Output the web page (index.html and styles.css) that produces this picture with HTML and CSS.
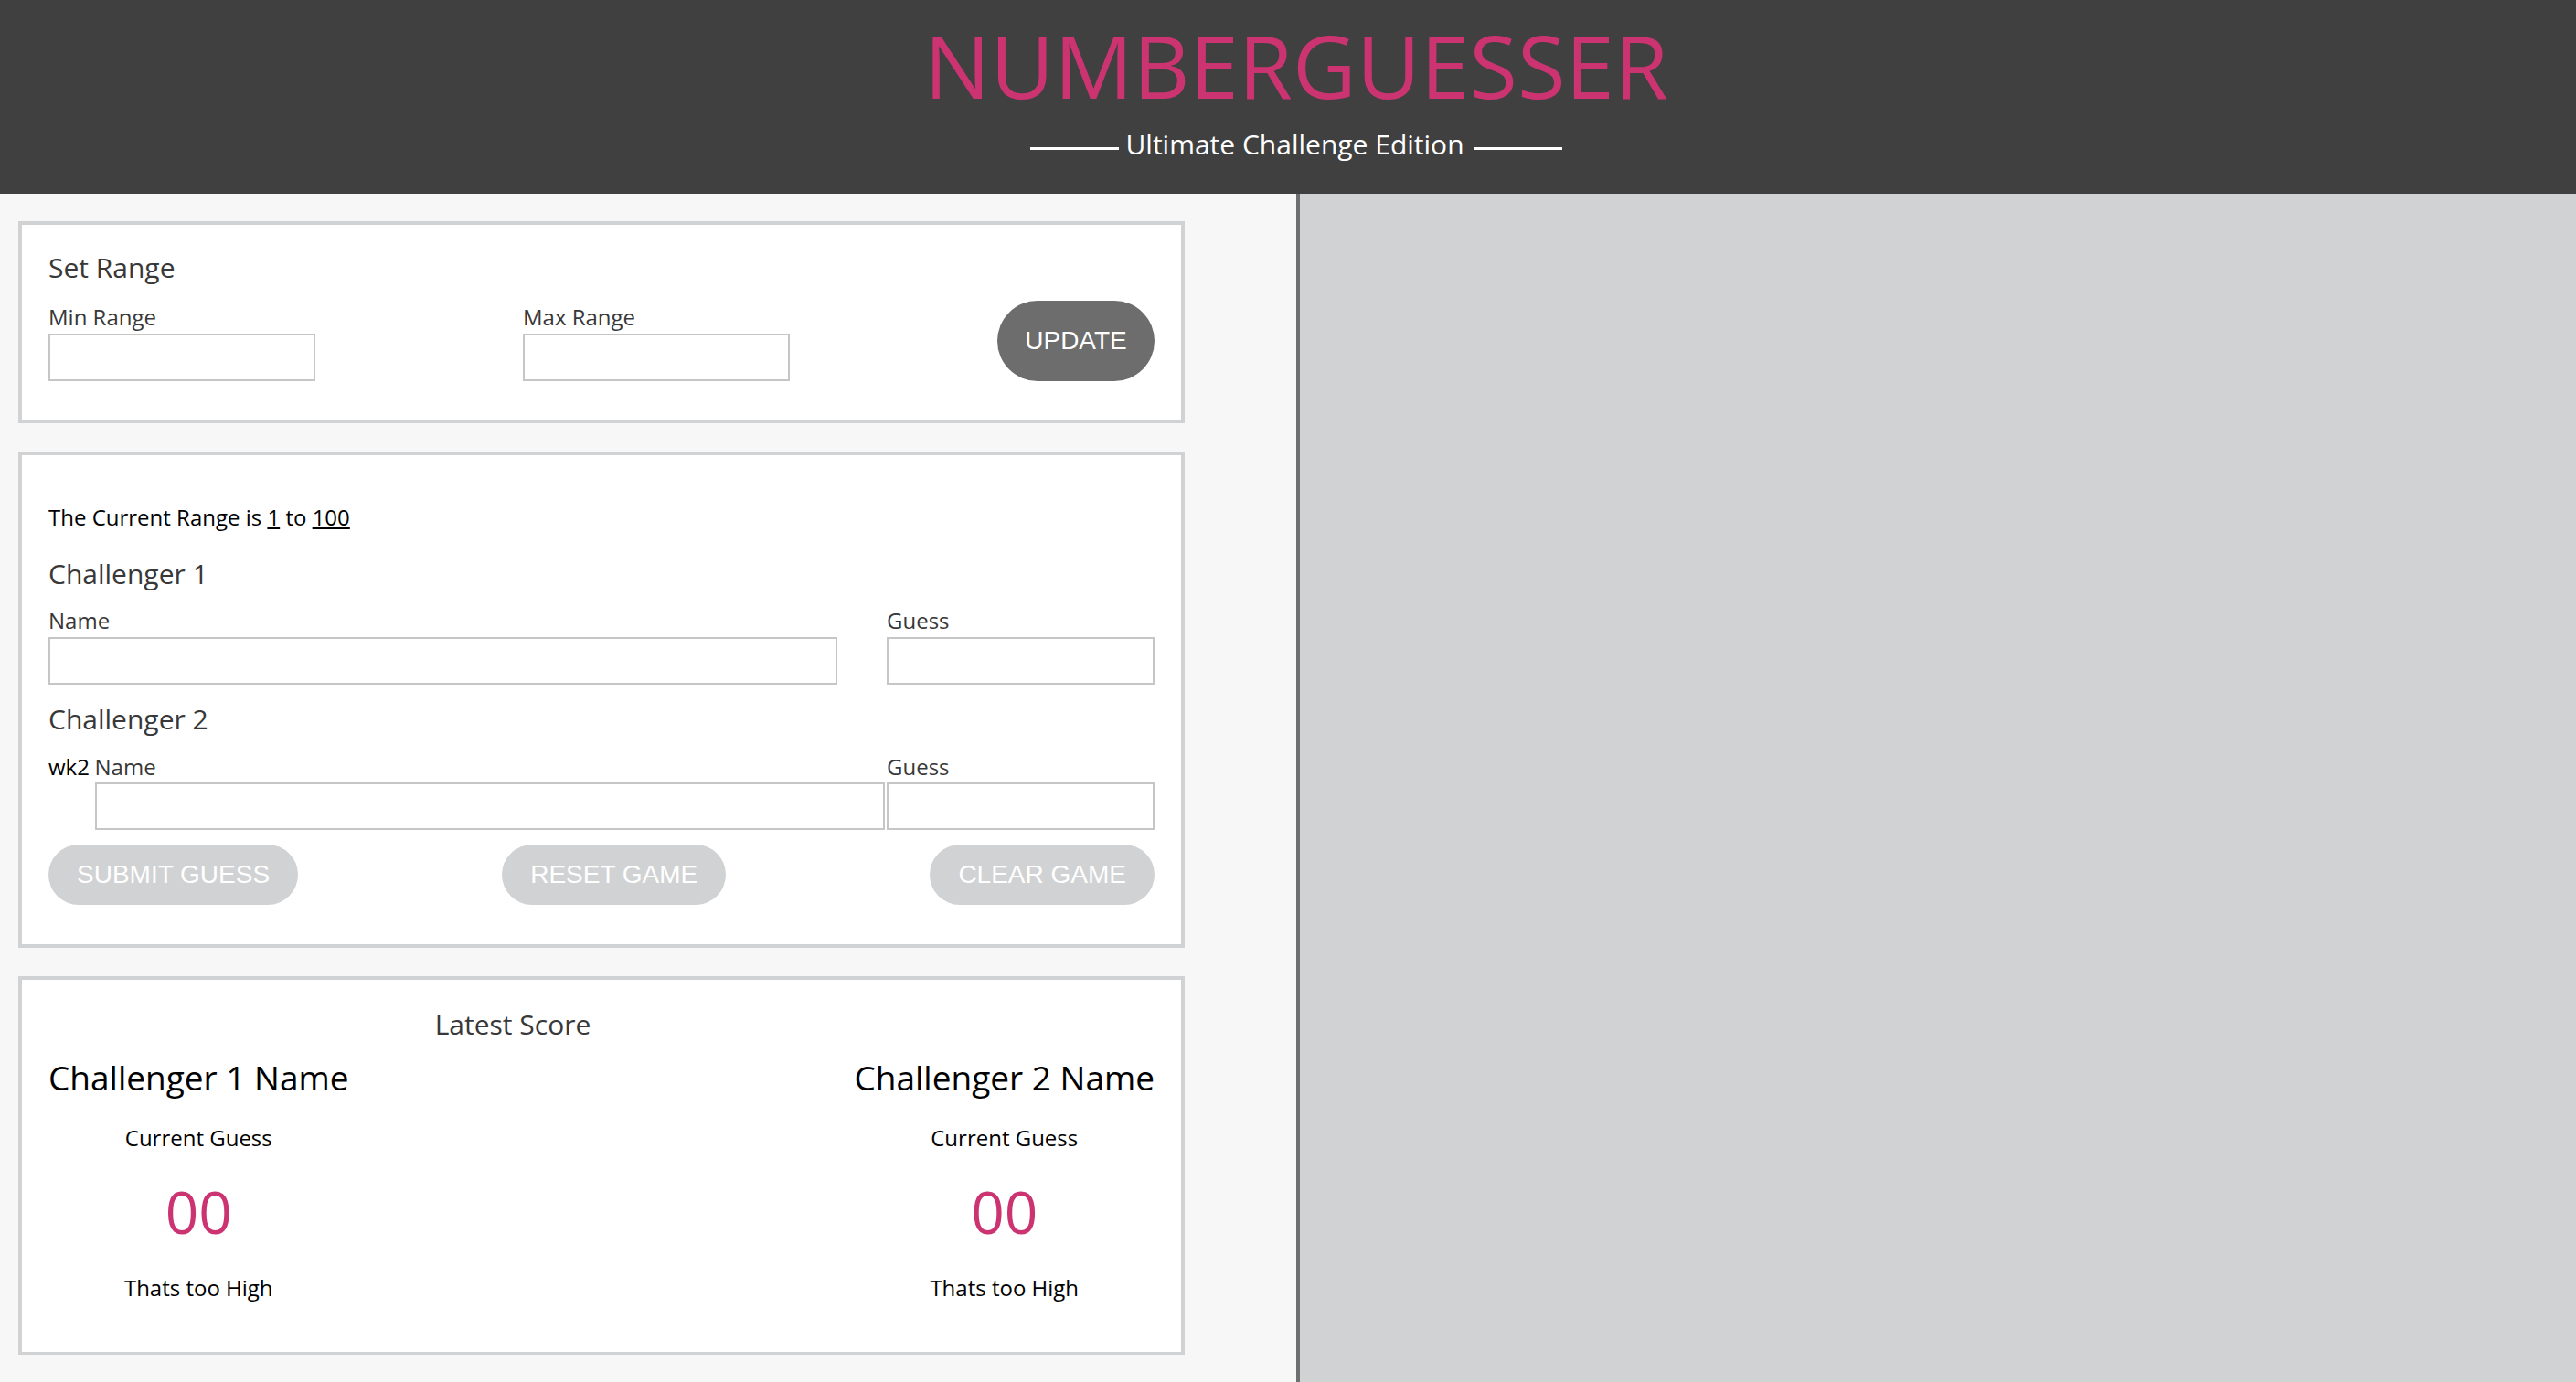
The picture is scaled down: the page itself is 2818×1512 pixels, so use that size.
FILE: index.html
```html
<!DOCTYPE html>
<html lang="en">
<head>
<meta charset="utf-8">
<title>Number Guesser</title>
<link rel="stylesheet" href="styles.css">
</head>
<body>
<header class="site-header">
  <h1 class="title">NUMBERGUESSER</h1>
  <p class="subtitle"><span class="rule"></span>Ultimate Challenge Edition<span class="rule rule-right"></span></p>
</header>
<div class="layout">
  <main class="left-panel">
    <section class="card card-range">
      <h2 class="card-heading">Set Range</h2>
      <div class="range-row">
        <div class="field">
          <label class="field-label">Min Range</label>
          <input class="text-input range-input" type="text">
        </div>
        <div class="field">
          <label class="field-label">Max Range</label>
          <input class="text-input range-input" type="text">
        </div>
        <button class="btn btn-dark">UPDATE</button>
      </div>
    </section>

    <section class="card card-guess">
      <p class="current-range">The Current Range is <span class="underline">1</span> to <span class="underline">100</span></p>
      <h3 class="card-heading challenger-heading">Challenger 1</h3>
      <div class="challenger-row">
        <div class="field">
          <label class="field-label">Name</label>
          <input class="text-input name-input" type="text">
        </div>
        <div class="field">
          <label class="field-label">Guess</label>
          <input class="text-input guess-input" type="text">
        </div>
      </div>
      <h3 class="card-heading challenger-heading second">Challenger 2</h3>
      <div class="challenger-row row-two">
        <span class="stray">wk2</span>
        <div class="field">
          <label class="field-label">Name</label>
          <input class="text-input name-input wide" type="text">
        </div>
        <div class="field">
          <label class="field-label">Guess</label>
          <input class="text-input guess-input" type="text">
        </div>
      </div>
      <div class="button-row">
        <button class="btn btn-light">SUBMIT GUESS</button>
        <button class="btn btn-light">RESET GAME</button>
        <button class="btn btn-light">CLEAR GAME</button>
      </div>
    </section>

    <section class="card card-score">
      <div class="score-title-wrap"><h3 class="score-title">Latest Score</h3></div>
      <div class="score-row">
        <div class="score-col">
          <h2 class="score-name">Challenger 1 Name</h2>
          <p class="score-label">Current Guess</p>
          <p class="score-number">00</p>
          <p class="score-label score-hint">Thats too High</p>
        </div>
        <div class="score-col">
          <h2 class="score-name">Challenger 2 Name</h2>
          <p class="score-label">Current Guess</p>
          <p class="score-number">00</p>
          <p class="score-label score-hint">Thats too High</p>
        </div>
      </div>
    </section>
  </main>
  <aside class="right-panel"></aside>
</div>
</body>
</html>
```

FILE: styles.css
```css
* { box-sizing: border-box; }

html, body {
  margin: 0;
  padding: 0;
}

body {
  font-family: "Open Sans", "Noto Sans", sans-serif;
  background: #f7f7f7;
  color: #000;
}

.site-header {
  height: 212px;
  background: #404040;
  padding-top: 16px;
  padding-left: 18px;
  text-align: center;
}

.title {
  margin: 0;
  font-size: 96px;
  line-height: 110px;
  font-weight: 400;
  color: #cc3471;
}

.subtitle {
  margin: 12px 0 0;
  font-size: 30px;
  line-height: 40px;
  color: #ffffff;
  display: flex;
  justify-content: center;
  align-items: center;
}

.rule {
  display: inline-block;
  width: 97px;
  height: 3px;
  background: #ffffff;
  margin-right: 7px;
  margin-top: 8px;
}

.rule-right {
  margin-right: 0;
  margin-left: 10px;
}

.layout {
  display: flex;
  min-height: calc(100vh - 212px);
}

.left-panel {
  width: 1422px;
  flex: none;
  background: #f7f7f7;
  border-right: 4px solid #6f6f6f;
  padding: 30px 0 29px 20px;
  display: flex;
  flex-direction: column;
  gap: 31px;
}

.right-panel {
  flex: 1;
  background: #d1d2d4;
}

.card {
  width: 1276px;
  background: #ffffff;
  border: 4px solid #d1d2d4;
  padding-left: 29px;
  padding-right: 29px;
}

.card-range {
  padding-top: 27px;
  padding-bottom: 42px;
}

.card-heading {
  margin: 0;
  font-size: 30px;
  line-height: 40px;
  font-weight: 400;
  color: #383838;
}

.range-row {
  margin-top: 16px;
  display: flex;
  justify-content: space-between;
  align-items: flex-end;
}

.field {
  display: flex;
  flex-direction: column;
}

.field-label {
  font-size: 24px;
  line-height: 32px;
  color: #383838;
}

.text-input {
  margin-top: 2px;
  height: 52px;
  border: 2px solid #c6c6c6;
  background: #ffffff;
  font: inherit;
  padding: 0 8px;
}

.range-input { width: 292px; }

.btn {
  border: none;
  color: #ffffff;
  font-family: "Liberation Sans", Arial, sans-serif;
  font-size: 28px;
  padding: 0 31px;
  border-radius: 44px;
}

.btn-dark {
  width: 172px;
  height: 88px;
  padding: 0;
  background: #6d6d6d;
}

.btn-light {
  height: 66px;
  background: #d1d2d4;
  border-radius: 33px;
}

.card-guess {
  padding-top: 52px;
  padding-bottom: 43px;
}

.current-range {
  margin: 0;
  font-size: 24px;
  line-height: 32px;
  color: #000;
}

.underline { text-decoration: underline; }

.challenger-heading { margin-top: 26px; }
.challenger-heading.second { margin-top: 18px; }

.challenger-row {
  margin-top: 15px;
  display: flex;
  justify-content: space-between;
  align-items: flex-start;
}

.row-two { margin-top: 16px; }
.row-two .text-input { margin-top: 1px; }

.stray {
  font-size: 24px;
  line-height: 32px;
  color: #000;
  width: 48px;
}

.name-input { width: 863px; }
.name-input.wide { width: 864px; }
.guess-input { width: 293px; }

.button-row {
  margin-top: 16px;
  display: flex;
  justify-content: space-between;
}

.card-score {
  padding-top: 29px;
  padding-bottom: 54px;
}

.score-title-wrap {
  margin-right: 194px;
  text-align: center;
}

.score-title {
  margin: 0;
  font-size: 30px;
  line-height: 40px;
  font-weight: 400;
  color: #383838;
}

.score-row {
  margin-top: 13px;
  display: flex;
  justify-content: space-between;
}

.score-col {
  text-align: center;
}

.score-name {
  margin: 0;
  font-size: 37px;
  line-height: 50px;
  font-weight: 400;
  color: #000;
}

.score-label {
  margin: 25px 0 0;
  font-size: 24px;
  line-height: 32px;
  color: #000;
}

.score-number {
  margin: 25px 0 0;
  font-size: 64px;
  line-height: 80px;
  color: #cc3471;
}

.score-hint { margin-top: 27px; }
```
